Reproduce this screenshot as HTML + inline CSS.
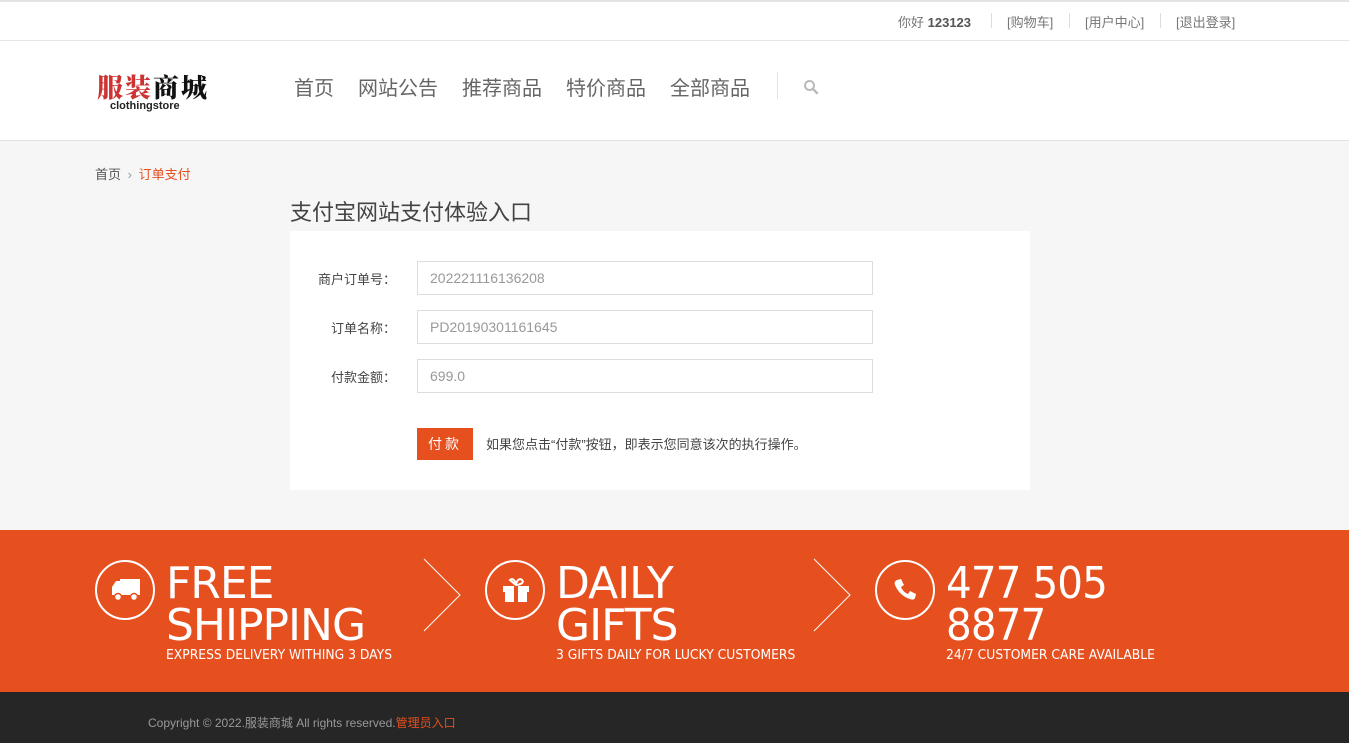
<!DOCTYPE html>
<html><head><meta charset="utf-8"><style>
*{margin:0;padding:0;box-sizing:border-box}
body{width:1349px;height:743px;overflow:hidden;background:#f6f6f6;font-family:"Liberation Sans","Noto Sans CJK SC",sans-serif;position:relative}
.abs{position:absolute}
.top{left:0;top:0;width:1349px;height:41px;background:#fff;border-top:2px solid #e3e3e3;border-bottom:1px solid #e6e6e6}
.tl{top:12px;font-size:13px;color:#777;white-space:nowrap}
.sep{top:13px;width:1px;height:15px;background:#ddd}
.hdr{left:0;top:41px;width:1349px;height:100px;background:#fff;border-bottom:1px solid #e2e2e2}
.nav{top:72px;font-size:20px;color:#666}
.ban{left:0;top:530px;width:1349px;height:162px;background:#e64f1e;color:#fff}
.circ{width:60px;height:60px;border:2px solid #fff;border-radius:50%;top:30px}
.big{font-size:44px;line-height:42px;top:33px;font-family:"DejaVu Sans","Liberation Sans",sans-serif;font-weight:normal;letter-spacing:-1px;transform-origin:left}
.small{font-size:13px;top:118px;font-family:"DejaVu Sans",sans-serif;transform:scaleX(0.95);transform-origin:left;white-space:nowrap}
.foot{left:0;top:692px;width:1349px;height:51px;background:#262626}
.lbl{font-size:13px;color:#444;text-align:right;width:106px;left:290px}
.inp{left:417px;width:456px;height:34px;border:1px solid #ddd;background:#fff;font-size:14px;color:#999;padding:8px 12px}
</style></head><body>
<div class="abs top"></div>
<div class="abs tl" style="left:898px">你好 <b style="color:#555">123123</b></div>
<div class="abs sep" style="left:991px"></div>
<div class="abs tl" style="left:1007px">[购物车]</div>
<div class="abs sep" style="left:1069px"></div>
<div class="abs tl" style="left:1085px">[用户中心]</div>
<div class="abs sep" style="left:1160px"></div>
<div class="abs tl" style="left:1176px">[退出登录]</div>
<div class="abs hdr"></div>
<div class="abs" style="left:97px;top:72px;font-size:26px;font-family:'Noto Serif CJK SC',serif;font-weight:900;letter-spacing:2px;line-height:30px"><span style="color:#c33">服装</span><span style="color:#111">商城</span></div>
<div class="abs" style="left:110px;top:100px;font-size:11px;font-weight:bold;color:#222">clothingstore</div>
<div class="abs nav" style="left:294px">首页</div>
<div class="abs nav" style="left:358px">网站公告</div>
<div class="abs nav" style="left:462px">推荐商品</div>
<div class="abs nav" style="left:566px">特价商品</div>
<div class="abs nav" style="left:670px">全部商品</div>
<div class="abs" style="left:777px;top:72px;width:1px;height:27px;background:#e3e3e3"></div>
<svg class="abs" style="left:803px;top:79px" width="16" height="16" viewBox="0 0 16 16"><circle cx="6.5" cy="6.5" r="4.5" fill="none" stroke="#bbb" stroke-width="2"/><path d="M10 10l4 4" stroke="#bbb" stroke-width="2.5" stroke-linecap="round"/></svg>
<div class="abs" style="left:95px;top:164px;font-size:13px;color:#555">首页 <span style="color:#999;margin:0 3px">›</span> <span style="color:#e64f1e">订单支付</span></div>
<div class="abs" style="left:290px;top:195px;font-size:22px;color:#444">支付宝网站支付体验入口</div>
<div class="abs" style="left:290px;top:231px;width:740px;height:259px;background:#fff"></div>
<div class="abs lbl" style="top:269px">商户订单号：</div>
<div class="abs inp" style="top:261px">202221116136208</div>
<div class="abs lbl" style="top:318px">订单名称：</div>
<div class="abs inp" style="top:310px">PD20190301161645</div>
<div class="abs lbl" style="top:367px">付款金额：</div>
<div class="abs inp" style="top:359px">699.0</div>
<div class="abs" style="left:417px;top:428px;width:56px;height:32px;background:#e64f1e;color:#fff;font-size:14px;text-align:center;line-height:32px;letter-spacing:3px">付款</div>
<div class="abs" style="left:486px;top:434px;font-size:13px;color:#444">如果您点击“付款”按钮，即表示您同意该次的执行操作。</div>
<div class="abs ban">
<div class="abs circ" style="left:95px"></div>
<svg class="abs" style="left:110px;top:47px" width="32" height="26" viewBox="0 0 32 26"><path d="M10 2h20v16H10zM2 10l4-6h4v14H2z" fill="#fff"/><circle cx="8" cy="20" r="3.5" fill="#fff" stroke="#e64f1e" stroke-width="1.5"/><circle cx="24" cy="20" r="3.5" fill="#fff" stroke="#e64f1e" stroke-width="1.5"/></svg>
<div class="abs big" style="left:166px">FREE<br>SHIPPING</div>
<div class="abs small" style="left:166px">EXPRESS DELIVERY WITHING 3 DAYS</div>
<svg class="abs" style="left:423px;top:28px" width="40" height="75"><path d="M1 1l36 36L1 73" fill="none" stroke="#fff" stroke-width="1"/></svg>
<div class="abs circ" style="left:485px"></div>
<svg class="abs" style="left:502px;top:47px" width="28" height="26" viewBox="0 0 28 26"><path d="M8 3c3-3 6 2 6 5c0-3 3-8 6-5s-3 5-6 5z" fill="none" stroke="#fff" stroke-width="2"/><rect x="1" y="9" width="26" height="6" fill="#fff"/><rect x="3" y="15" width="22" height="10" fill="#fff"/><rect x="12" y="9" width="4" height="16" fill="#e64f1e"/></svg>
<div class="abs big" style="left:556px">DAILY<br>GIFTS</div>
<div class="abs small" style="left:556px">3 GIFTS DAILY FOR LUCKY CUSTOMERS</div>
<svg class="abs" style="left:813px;top:28px" width="40" height="75"><path d="M1 1l36 36L1 73" fill="none" stroke="#fff" stroke-width="1"/></svg>
<div class="abs circ" style="left:875px"></div>
<svg class="abs" style="left:892px;top:47px" width="26" height="26" viewBox="0 0 26 26"><path d="M5 3l4-1 3 6-3 2c1 3 4 6 7 7l2-3 6 3-1 4c-1 2-3 2-5 1C11 20 6 15 3 8 2 6 3 4 5 3z" fill="#fff"/></svg>
<div class="abs big" style="left:946px;transform:scaleX(0.92)">477 505<br>8877</div>
<div class="abs small" style="left:946px">24/7 CUSTOMER CARE AVAILABLE</div>
</div>
<div class="abs foot"></div>
<div class="abs" style="left:148px;top:714px;font-size:12px;color:#999">Copyright © 2022.服装商城 All rights reserved.<span style="color:#e64f1e">管理员入口</span></div>
</body></html>
